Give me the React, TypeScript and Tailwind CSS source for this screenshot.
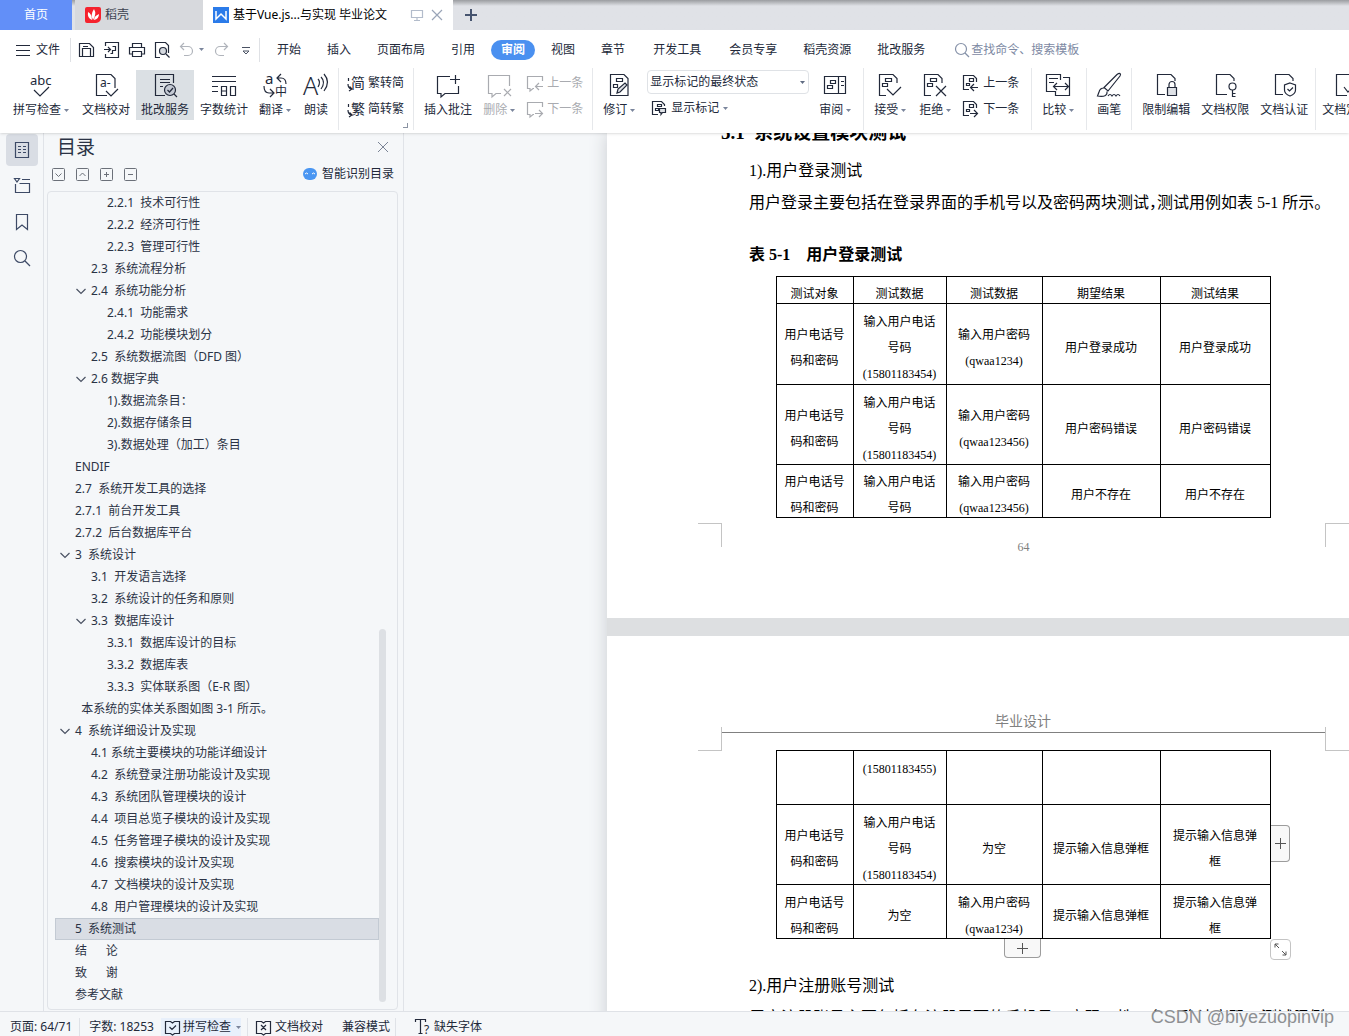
import type { ReactNode } from 'react';

type IconProps = { size?: number; className?: string; children: ReactNode };

function Icon({ size = 24, className = '', children }: IconProps) {
  return (
    <svg
      width={size}
      height={size}
      viewBox={`0 0 ${size} ${size}`}
      fill="none"
      stroke="currentColor"
      strokeWidth="1.2"
      className={`shrink-0 overflow-visible ${className}`}
      aria-hidden="true"
    >
      {children}
    </svg>
  );
}

function Caret({ className = 'text-[#7a859c]' }: { className?: string }) {
  return (
    <svg width="5" height="3" viewBox="0 0 5 3" className={`shrink-0 ${className}`} aria-hidden="true">
      <path d="M0 0h5L2.500 3z" fill="currentColor" />
    </svg>
  );
}

function Glyph({ x, y, size, children }: { x: number; y: number; size: number; children: string }) {
  return (
    <text x={x} y={y} fontSize={size} fill="currentColor" stroke="none">
      {children}
    </text>
  );
}

/* Document with two small revision bars, shared by several icons */
const revisionDoc = (
  <>
    <path d="M8 22.500H1.500v-21H15l4 4V10" />
    <path d="M7.500 5.500h6v3h-6zM4.500 10.500h5v3h-5z" />
  </>
);

const icons = {
  spell: (
    <Icon>
      <Glyph x={1} y={12} size={13}>abc</Glyph>
      <path d="M5 17l6 6 9-9" />
    </Icon>
  ),
  proof: (
    <Icon>
      <path d="M13 22.500H2.500v-21H17l4 4V15" />
      <Glyph x={6} y={14} size={12}>a-</Glyph>
      <path d="M12 18l5 5 7-7" />
    </Icon>
  ),
  service: (
    <Icon>
      <path d="M12 22.500H2.500v-21h18V10M7 6.500h10M7 9.500h10M7 13.500h3" />
      <circle cx="17" cy="17" r="5.500" fill="#c3c9d3" />
      <path d="M14.500 17l2 2 3.500-4M21 21l3 3" />
    </Icon>
  ),
  count: (
    <Icon>
      <path d="M0 3.500h24M0 8.500h24M0 13.500h6M0 18.500h6M9.500 13.500h5v9h-5zM9.500 18h5M18.500 13.500h5v9h-5z" />
    </Icon>
  ),
  translate: (
    <Icon>
      <Glyph x={2} y={11} size={15}>a</Glyph>
      <Glyph x={12} y={23} size={12}>中</Glyph>
      <path d="M18 1l-4 4 4 4M14 5h4q5 0 5 6M1 13q0 7 5 7h4M7 16l4 4-4 4" />
    </Icon>
  ),
  read: (
    <Icon>
      <text x="-1" y="22" fontSize="25" fontWeight="300" fill="currentColor" stroke="none">A</text>
      <path d="M14 6q3 3 0 8M17 4q5 5 0 12M20 1q7 8 0 17" />
    </Icon>
  ),
  addComment: (
    <Icon>
      <path d="M14 3.500H1.500v17H5V24l4-3.500h13.500V13M14 6.500h10M19.500 2v9" />
    </Icon>
  ),
  delComment: (
    <Icon>
      <path d="M14 20.500H9L5 24v-3.500H1.500v-18h21V13M17 16l7 7M24 16l-7 7" />
    </Icon>
  ),
  revise: (
    <Icon>
      <path d="M3.500 1.500H17l4 4v17H3.500zM9.500 5.500h6v3h-6zM6.500 11.500h4v3h-4z" />
      <path d="M10 20l1-4 7-6 2 2-7 7z" fill="#dfe2e7" />
    </Icon>
  ),
  pane: (
    <Icon>
      <path d="M1.500 3.500h21v17h-21zM15.500 3.500v17M7.500 7.500h5v3h-5zM4.500 12.500h5v3h-5zM18 8.500h3M18 12.500h3" />
    </Icon>
  ),
  accept: (
    <Icon>
      {revisionDoc}
      <path d="M9 16l6 6 8-8" />
    </Icon>
  ),
  reject: (
    <Icon>
      {revisionDoc}
      <path d="M13 13l10 10M23 13L13 23" />
    </Icon>
  ),
  compare: (
    <Icon>
      <path d="M9 18.500H.5v-17h14V7M3 5.500h9M3 9.500h5M17 4.500h6.500v18h-14V18M8 13.500h14M11 10l-3.500 3.500L11 17M19 10l3.500 3.500L19 17" />
    </Icon>
  ),
  brush: (
    <Icon>
      <path d="M23 .5q1 1 0 2.500L11 18l-4-3.500L20 1.500q2-1.500 3-1zM7 15q-4 0-5 4l-1.500 4q5 1 8-.5 2-1.500 1.500-4M11 23q2-3 4 0 2-3 4 0 2-3 4 0" />
    </Icon>
  ),
  lock: (
    <Icon>
      <path d="M11 21.500H3.500v-20H17l4 4V8M15 14v-2.500a3 3 0 0 1 6 0V14" />
      <path d="M13.500 14.500h9v8h-9z" fill="#dfe2e7" />
    </Icon>
  ),
  permission: (
    <Icon>
      <path d="M14 21.500H3.500v-20H17l4 4V8" />
      <circle cx="19.500" cy="13.500" r="3.500" />
      <path d="M19.500 17v7M19.500 20.500h3M19.500 23.500h3" />
    </Icon>
  ),
  certify: (
    <Icon>
      <path d="M11 21.500H3.500v-20H17l4 4V8M18 10l5.500 2v5q0 4-5.500 6-5.500-2-5.500-6v-5zM15.500 16l2 2 3.500-3.500" />
    </Icon>
  ),
  finalize: (
    <Icon>
      <path d="M13 22.500H2.500v-21H17l4 4V12M10 14l4 5 8-8" />
    </Icon>
  ),
};

function SmallComment({ dir }: { dir: 'prev' | 'next' }) {
  return (
    <Icon size={16}>
      <path d="M15.500 6V1.500H.5v12H3V16l3-2.500h1" />
      <path d={dir === 'prev' ? 'M16 11.500H9M12 8l-3.500 3.500L12 15' : 'M8 12.500h7M12 9l3.500 3.500L12 16'} />
    </Icon>
  );
}

function SmallRevision({ dir }: { dir: 'prev' | 'next' }) {
  return (
    <Icon size={16}>
      <path d="M6 14.500H.5v-14h10l3 3V7M6.500 3.500h4v3h-4zM3.500 8.500h3v2h-3z" />
      <path d={dir === 'prev' ? 'M15 12.500H7.500M11 9l-3.500 3.500L11 16' : 'M7 12.500h7M11 9l3.500 3.500L11 16'} />
    </Icon>
  );
}

function ConvertIcon({ char }: { char: string }) {
  return (
    <Icon size={16}>
      <Glyph x={3} y={13} size={14}>{char}</Glyph>
      <path d="M.5 3v3M0 9q0 4 3 5M1.500 11.500L4 14l-3 2" />
    </Icon>
  );
}

type BigButtonProps = { icon: ReactNode; label: string; caret?: boolean; active?: boolean; muted?: boolean };

function BigButton({ icon, label, caret, active, muted }: BigButtonProps) {
  return (
    <button
      className={`flex h-[50px] shrink-0 flex-col items-start pt-[3px] pl-[5px] ${caret ? 'pr-[7px]' : 'pr-[5px]'} ${
        active ? 'bg-[#dbe0e4]' : ''
      } ${muted ? 'text-[#a9abb0]' : 'text-[#22293a]'}`}
    >
      <span className="flex w-full justify-center">{icon}</span>
      <span className="mt-1 flex items-center gap-[3px] text-xs leading-[18px] whitespace-nowrap">
        {label}
        {caret && <Caret />}
      </span>
    </button>
  );
}

function SmallButton({ icon, label, muted, caret }: { icon: ReactNode; label: string; muted?: boolean; caret?: boolean }) {
  return (
    <button
      className={`flex h-[26px] items-center gap-1 text-xs whitespace-nowrap ${muted ? 'text-[#a9abb0]' : 'text-[#22293a]'}`}
    >
      {icon}
      {label}
      {caret && <Caret />}
    </button>
  );
}

function Group({ className = 'px-[5px]', children }: { className?: string; children: ReactNode }) {
  return (
    <div className={`flex h-[62px] shrink-0 items-start gap-px border-r border-[#e6e8eb] pt-0.5 ${className}`}>
      {children}
    </div>
  );
}

function TitleTabs() {
  return (
    <div className="flex h-[30px] shrink-0 bg-[#e0e2e7] bg-linear-to-b from-[#9b9da1] from-0% to-[#e0e2e7] to-20% text-xs">
      <button className="w-[72px] shrink-0 bg-[#628ff8] text-white">首页</button>
      <button className="ml-[3px] flex w-32 shrink-0 items-center gap-1 bg-[#d7d9dd] pl-[10px] text-[#3c4250]">
        <svg width="16" height="16" viewBox="0 0 16 16" aria-hidden="true">
          <path d="M2 0h12a2 2 0 0 1 2 2v9a5 5 0 0 1-5 5H2a2 2 0 0 1-2-2V2a2 2 0 0 1 2-2z" fill="#f5222d" />
          <path d="M8 13Q5 8 9 2q3 5-1 11zM7 13Q2 11 3 5q4 2 4 8zM9 13q0-4 5-6 0 5-5 6z" fill="#fff" />
        </svg>
        稻壳
      </button>
      <div className="flex w-[250px] shrink-0 items-center bg-white pl-[10px] text-black">
        <svg width="16" height="16" viewBox="0 0 16 16" aria-hidden="true">
          <path d="M0 0h16v16H0z" fill="#2b7be9" />
          <path d="M3 4v8l5-5 5 5V4" fill="none" stroke="#fff" strokeWidth="1.500" />
        </svg>
        <span className="ml-1 flex-1 whitespace-nowrap">基于Vue.js...与实现 毕业论文</span>
        <button aria-label="窗口" className="mr-2 text-[#b3bccb]">
          <Icon size={12}>
            <path d="M.5 1.500h11v7H.5zM6 8.500v3M3 11.500h6" />
          </Icon>
        </button>
        <button aria-label="关闭" className="mr-[10px] text-[#9aa5b8]">
          <Icon size={12}>
            <path d="M1 1l10 10M11 1L1 11" />
          </Icon>
        </button>
      </div>
      <button aria-label="新建" className="ml-3 text-[#46546f]">
        <Icon size={12}>
          <path d="M6 0v12M0 6h12" strokeWidth="2" />
        </Icon>
      </button>
    </div>
  );
}

const menus = [
  { label: '开始' },
  { label: '插入' },
  { label: '页面布局' },
  { label: '引用' },
  { label: '审阅', active: true },
  { label: '视图' },
  { label: '章节' },
  { label: '开发工具' },
  { label: '会员专享' },
  { label: '稻壳资源' },
  { label: '批改服务' },
];

function MenuBar() {
  return (
    <div className="flex h-[38px] shrink-0 items-center pt-px pl-4 text-xs text-[#22293a]">
      <button className="flex items-center gap-[6px]">
        <Icon size={14}>
          <path d="M0 2.500h14M0 7.500h14M0 12.500h14" strokeWidth="1" />
        </Icon>
        文件
      </button>
      <div className="ml-[10px] flex h-6 items-center gap-[9px] border-x border-[#dfe1e5] pr-[5px] pl-2">
        <button aria-label="保存">
          <Icon size={16}>
            <path d="M.5 14.500v-13h10l4 4v9zM3.500 14.500v-8h8v8M4 4.500h5" />
          </Icon>
        </button>
        <button aria-label="输出为PDF">
          <Icon size={16}>
            <path d="M1.500 4V.5h13v15h-13V12M0 7.500h6M4 5l2.500 2.500L4 10M8.500 4.500h3v4h-3v3h-2" />
          </Icon>
        </button>
        <button aria-label="打印">
          <Icon size={16}>
            <path d="M3.500 5V1.500h9V5M3.500 12H.5V5.500h15V12h-3M3.500 9.500h9v5h-9z" />
          </Icon>
        </button>
        <button aria-label="打印预览">
          <Icon size={16}>
            <path d="M6 15.500H1.500v-15h10l3 3V11" />
            <circle cx="9" cy="9" r="3.500" fill="#d5d9df" />
            <path d="M12 12l3.500 3.500" />
          </Icon>
        </button>
        <div className="flex items-center gap-1 text-[#b0b4bb]">
          <button aria-label="撤销">
            <Icon size={16}>
              <path d="M5 1L1.500 4.500 5 8M1.500 4.500H9a4.500 4.500 0 0 1 0 9H5" />
            </Icon>
          </button>
          <Caret />
        </div>
        <button aria-label="恢复" className="text-[#b0b4bb]">
          <Icon size={16}>
            <path d="M11 1l3.500 3.500L11 8M14.500 4.500H7a4.500 4.500 0 0 0 0 9h4" />
          </Icon>
        </button>
        <button aria-label="自定义快速访问" className="text-[#4a5263]">
          <Icon size={16}>
            <path d="M4 5.500h8M5 9l3 3 3-3z" strokeWidth="1" />
          </Icon>
        </button>
      </div>
      <nav className="ml-1 flex items-center">
        {menus.map((menu) => (
          <button
            key={menu.label}
            className={
              menu.active
                ? 'mx-[3px] h-5 rounded-full bg-[#4a90f0] px-[10px] font-bold whitespace-nowrap text-white'
                : menu.label === '开发工具'
                  ? 'mx-px h-5 px-[14px] whitespace-nowrap'
                  : 'h-5 px-[13px] whitespace-nowrap'
            }
          >
            {menu.label}
          </button>
        ))}
      </nav>
      <label className="ml-4 flex items-center gap-px text-[#8591a8]">
        <Icon size={16}>
          <circle cx="7" cy="7" r="5.500" />
          <path d="M11 11l4 4" />
        </Icon>
        <input
          aria-label="查找命令"
          placeholder="查找命令、搜索模板"
          className="w-32 outline-none placeholder:text-[#7d89a3]"
        />
      </label>
    </div>
  );
}

function Ribbon() {
  return (
    <div className="flex h-[65px] shrink-0 overflow-hidden pl-[3px]">
      <Group>
        <BigButton icon={icons.spell} label="拼写检查" caret />
        <BigButton icon={icons.proof} label="文档校对" />
        <BigButton icon={icons.service} label="批改服务" active />
        <BigButton icon={icons.count} label="字数统计" />
        <BigButton icon={icons.translate} label="翻译" caret />
        <BigButton icon={icons.read} label="朗读" />
      </Group>
      <Group className="relative px-[9px]">
        <div>
          <SmallButton icon={<ConvertIcon char="简" />} label="繁转简" />
          <SmallButton icon={<ConvertIcon char="繁" />} label="简转繁" />
        </div>
        <span className="absolute right-[5px] bottom-0.5 size-[5px] border-r border-b border-[#8b93a3]" />
      </Group>
      <Group className="pr-[9px] pl-[5px]">
        <BigButton icon={icons.addComment} label="插入批注" />
        <BigButton icon={icons.delComment} label="删除" caret muted />
        <div className="ml-1">
          <SmallButton icon={<SmallComment dir="prev" />} label="上一条" muted />
          <SmallButton icon={<SmallComment dir="next" />} label="下一条" muted />
        </div>
      </Group>
      <Group>
        <BigButton icon={icons.revise} label="修订" caret />
        <div className="mx-1">
          <div className="relative flex items-center">
            <select
              aria-label="标记显示方式"
              className="h-6 w-[162px] appearance-none rounded-sm border border-[#dfe2e6] pl-0.5 text-xs text-[#22293a]"
            >
              <option>显示标记的最终状态</option>
            </select>
            <Caret className="absolute right-1 text-[#5f6b82]" />
          </div>
          <div className="pt-px pl-1">
            <SmallButton
              icon={
                <Icon size={16}>
                  <path d="M7 14.500H1.500v-13h9l3 3V6M6.500 4.500h4v2h-4zM4.500 8.500h3v2h-3z" />
                  <path d="M8.500 8.500h6v4h-3l-1.500 2v-2H8.500z" fill="#dfe2e7" />
                </Icon>
              }
              label="显示标记"
              caret
            />
          </div>
        </div>
        <BigButton icon={icons.pane} label="审阅" caret />
      </Group>
      <Group className="pr-3 pl-[5px]">
        <BigButton icon={icons.accept} label="接受" caret />
        <BigButton icon={icons.reject} label="拒绝" caret />
        <div className="ml-1">
          <SmallButton icon={<SmallRevision dir="prev" />} label="上一条" />
          <SmallButton icon={<SmallRevision dir="next" />} label="下一条" />
        </div>
      </Group>
      <Group>
        <BigButton icon={icons.compare} label="比较" caret />
      </Group>
      <Group>
        <BigButton icon={icons.brush} label="画笔" />
      </Group>
      <Group className="pr-0.5 pl-[5px]">
        <BigButton icon={icons.lock} label="限制编辑" />
        <BigButton icon={icons.permission} label="文档权限" />
        <BigButton icon={icons.certify} label="文档认证" />
      </Group>
      <Group className="pl-px">
        <BigButton icon={icons.finalize} label="文档定稿" />
      </Group>
    </div>
  );
}

function SideRail() {
  return (
    <div className="flex w-11 shrink-0 flex-col items-center gap-1 border-r border-[#e0e3e8] pt-px text-[#3d4a66]">
      <button aria-label="目录" className="grid size-8 place-items-center rounded-sm bg-[#d9dde4]">
        <Icon size={16}>
          <path d="M1.500.5h13v15h-13zM4 4.500h3M4 7.500h3M4 10.500h3M9 4.500h3M9 7.500h3M9 10.500h3" />
        </Icon>
      </button>
      <button aria-label="章节" className="grid size-8 place-items-center">
        <Icon size={16}>
          <path d="M.5.5h5L3 4zM8 1.500h8M1.500 6v8.500h14v-9h-10" />
        </Icon>
      </button>
      <button aria-label="书签" className="grid size-8 place-items-center">
        <Icon size={16}>
          <path d="M2.500.5h11v15L8 11l-5.500 4.500z" />
        </Icon>
      </button>
      <button aria-label="查找" className="grid size-8 place-items-center">
        <Icon size={16}>
          <circle cx="6.500" cy="6.500" r="6" />
          <path d="M11 11l5 5" />
        </Icon>
      </button>
    </div>
  );
}

type OutlineRow = { text: string; level: number; open?: boolean; selected?: boolean };

const outline: OutlineRow[] = [
  { text: '2.2.1  技术可行性', level: 3 },
  { text: '2.2.2  经济可行性', level: 3 },
  { text: '2.2.3  管理可行性', level: 3 },
  { text: '2.3  系统流程分析', level: 2 },
  { text: '2.4  系统功能分析', level: 2, open: true },
  { text: '2.4.1  功能需求', level: 3 },
  { text: '2.4.2  功能模块划分', level: 3 },
  { text: '2.5  系统数据流图（DFD 图）', level: 2 },
  { text: '2.6 数据字典', level: 2, open: true },
  { text: '1).数据流条目：', level: 3 },
  { text: '2).数据存储条目', level: 3 },
  { text: '3).数据处理（加工）条目', level: 3 },
  { text: 'ENDIF', level: 1 },
  { text: '2.7  系统开发工具的选择', level: 1 },
  { text: '2.7.1  前台开发工具', level: 1 },
  { text: '2.7.2  后台数据库平台', level: 1 },
  { text: '3  系统设计', level: 1, open: true },
  { text: '3.1  开发语言选择', level: 2 },
  { text: '3.2  系统设计的任务和原则', level: 2 },
  { text: '3.3  数据库设计', level: 2, open: true },
  { text: '3.3.1  数据库设计的目标', level: 3 },
  { text: '3.3.2  数据库表', level: 3 },
  { text: '3.3.3  实体联系图（E-R 图）', level: 3 },
  { text: '  本系统的实体关系图如图 3-1 所示。', level: 1 },
  { text: '4  系统详细设计及实现', level: 1, open: true },
  { text: '4.1 系统主要模块的功能详细设计', level: 2 },
  { text: '4.2  系统登录注册功能设计及实现', level: 2 },
  { text: '4.3  系统团队管理模块的设计', level: 2 },
  { text: '4.4  项目总览子模块的设计及实现', level: 2 },
  { text: '4.5  任务管理子模块的设计及实现', level: 2 },
  { text: '4.6  搜索模块的设计及实现', level: 2 },
  { text: '4.7  文档模块的设计及实现', level: 2 },
  { text: '4.8  用户管理模块的设计及实现', level: 2 },
  { text: '5  系统测试', level: 1, selected: true },
  { text: '结      论', level: 1 },
  { text: '致      谢', level: 1 },
  { text: '参考文献', level: 1 },
];

const indents: Record<number, string> = { 1: 'pl-1', 2: 'pl-5', 3: 'pl-9' };

const outlineTools = [
  { label: '展开', d: 'M3.500 5.500l3 3 3-3' },
  { label: '收起', d: 'M3.500 8l3-3 3 3' },
  { label: '增加级别', d: 'M6.500 4v5M4 6.500h5' },
  { label: '减少级别', d: 'M4 6.500h5' },
];

function OutlinePanel() {
  return (
    <aside className="flex w-[360px] shrink-0 flex-col border-r border-[#e0e3e8] pr-[5px] pl-[3px] text-[#2b3345]">
      <div className="flex h-7 items-center justify-between pr-[10px] pl-[10px]">
        <h2 className="text-[19px] leading-7">目录</h2>
        <button aria-label="关闭目录" className="text-[#7b8496]">
          <Icon size={10}>
            <path d="M0 0l10 10M10 0L0 10" strokeWidth="1" />
          </Icon>
        </button>
      </div>
      <div className="flex h-[26px] items-center gap-[11px] pl-[5px]">
        {outlineTools.map((tool) => (
          <button key={tool.label} aria-label={tool.label} className="text-[#6b7079]">
            <Icon size={13}>
              <rect x=".5" y=".5" width="12" height="12" rx="1" strokeWidth="1" />
              <path d={tool.d} strokeWidth="1" />
            </Icon>
          </button>
        ))}
        <button className="mr-1 ml-auto flex items-center gap-[5px] text-xs text-[#22293a]">
          <svg width="14" height="12" viewBox="0 0 14 12" aria-hidden="true">
            <rect width="14" height="12" rx="6" fill="#4a96f2" />
            <path d="M2 6q1.500-2 3 0M9 6q1.500-2 3 0" fill="none" stroke="#fff" />
          </svg>
          智能识别目录
        </button>
      </div>
      <div className="mt-1 mb-px flex min-h-0 flex-1 overflow-hidden rounded-sm border border-[#e0e3e8] pl-[7px]">
        <ul className="min-w-0 flex-1">
          {outline.map((row) => (
            <li key={row.text}>
              <button
                className={`flex h-[22px] w-full items-center ${indents[row.level]} ${
                  row.selected ? 'border border-[#c3cad3] bg-[#d9dde4]' : 'border border-transparent'
                }`}
              >
                <span className="flex w-[15px] shrink-0 text-[#4a5263]">
                  {row.open && (
                    <Icon size={10}>
                      <path d="M.5 3L5 7.500 9.500 3" />
                    </Icon>
                  )}
                </span>
                <span className="text-xs leading-5 whitespace-pre">{row.text}</span>
              </button>
            </li>
          ))}
        </ul>
        <div className="mr-[11px] mb-[7px] flex w-[7px] flex-col justify-end">
          <div className="h-[46%] rounded-full bg-[#dde0e4]" />
        </div>
      </div>
    </aside>
  );
}

function TestTable({ rows }: { rows: { height: string; cells: string[][] }[] }) {
  return (
    <table className="w-[495px] table-fixed border-collapse text-center text-xs text-black">
      <colgroup>
        <col className="w-[77px]" />
        <col className="w-[93px]" />
        <col className="w-[96px]" />
        <col className="w-[118px]" />
        <col className="w-[110px]" />
      </colgroup>
      <tbody>
        {rows.map((row, i) => (
          <tr key={i}>
            {row.cells.map((lines, j) => (
              <td key={j} className="border border-black p-0 pr-px">
                <div className={`flex flex-col justify-center pt-2 leading-[26px] ${row.height}`}>
                  {lines.map((line, k) => (
                    <div key={k} className="h-[26px] shrink-0 whitespace-nowrap">{line}</div>
                  ))}
                </div>
              </td>
            ))}
          </tr>
        ))}
      </tbody>
    </table>
  );
}

const account = ['用户电话号', '码和密码'];

const firstRows = [
  { height: 'h-[26px]', cells: [['测试对象'], ['测试数据'], ['测试数据'], ['期望结果'], ['测试结果']] },
  {
    height: 'h-20',
    cells: [account, ['输入用户电话', '号码', '(15801183454)'], ['输入用户密码', '(qwaa1234)'], ['用户登录成功'], ['用户登录成功']],
  },
  {
    height: 'h-[79px]',
    cells: [account, ['输入用户电话', '号码', '(15801183454)'], ['输入用户密码', '(qwaa123456)'], ['用户密码错误'], ['用户密码错误']],
  },
  {
    height: 'h-[52px]',
    cells: [account, ['输入用户电话', '号码'], ['输入用户密码', '(qwaa123456)'], ['用户不存在'], ['用户不存在']],
  },
];

const secondRows = [
  { height: 'h-[53px]', cells: [[], ['(15801183455)', ''], [], [], []] },
  {
    height: 'h-[79px]',
    cells: [account, ['输入用户电话', '号码', '(15801183454)'], ['为空'], ['提示输入信息弹框'], ['提示输入信息弹', '框']],
  },
  {
    height: 'h-[53px]',
    cells: [account, ['为空'], ['输入用户密码', '(qwaa1234)'], ['提示输入信息弹框'], ['提示输入信息弹', '框']],
  },
];

const plus = (
  <Icon size={11}>
    <path d="M5.500 0v11M0 5.500h11" strokeWidth="1" />
  </Icon>
);

function DocumentArea() {
  return (
    <main className="min-w-0 flex-1 overflow-hidden pl-[203px] font-['Liberation_Serif','Noto_Sans_CJK_SC',serif] text-base text-black">
      <div className="flex w-[832px] flex-col gap-[18px] bg-[#dddfe1] shadow-[0_0_17px_#c9ccd0]">
        <section className="h-[485px] bg-white">
          <div className="flex h-[11px] items-end overflow-hidden pl-[114px]">
            <h3 className="text-[19px] leading-[22px] font-bold whitespace-pre">5.1  系统设置模块测试</h3>
          </div>
          <div className="mt-[11px] pl-[142px] leading-8 whitespace-nowrap">
            <p>1).用户登录测试</p>
            <p>
              用户登录主要包括在登录界面的手机号以及密码两块测试
              <span className="[font-feature-settings:'halt']">，</span>测试用例如表 5-1 所示。
            </p>
            <h4 className="mt-5 font-bold whitespace-pre">表 5-1    用户登录测试</h4>
          </div>
          <div className="mt-[5px] pl-[169px]">
            <TestTable rows={firstRows} />
          </div>
          <div className="mt-[5px] flex h-12 items-center justify-between pr-[90px] pl-[91px]">
            <span className="h-6 w-6 self-start border-t border-r border-[#c4c4c4]" />
            <span className="text-xs text-[#808080]">64</span>
            <span className="h-6 w-6 self-start border-t border-l border-[#c4c4c4]" />
          </div>
        </section>

        <section className="h-[700px] bg-white pt-[76px]">
          <p className="text-center text-sm leading-5 text-[#808080]">毕业设计</p>
          <div className="-mt-[5px] flex h-[23px] pr-[90px] pl-[91px]">
            <span className="h-6 w-6 border-r border-b border-[#c4c4c4]" />
            <span className="mt-[5px] flex-1 border-t border-[#808080]" />
            <span className="h-6 w-6 border-b border-l border-[#c4c4c4]" />
          </div>
          <div className="pl-[169px]">
            <div className="relative w-[495px]">
              <TestTable rows={secondRows} />
              <button
                aria-label="添加列"
                className="absolute top-[75px] left-full grid h-[37px] w-[19px] place-items-center rounded-r-sm border border-l-0 border-[#9c9c9c] bg-[#f8f8f8] text-[#555]"
              >
                {plus}
              </button>
              <button
                aria-label="添加行"
                className="absolute top-full left-[228px] grid h-[19px] w-[37px] place-items-center rounded-b-sm border border-t-0 border-[#9c9c9c] bg-[#f8f8f8] text-[#555]"
              >
                {plus}
              </button>
              <button
                aria-label="调整表格大小"
                className="absolute top-full left-[494px] grid size-[21px] place-items-center rounded-sm border border-[#c4c4c4] bg-white text-[#555]"
              >
                <Icon size={15}>
                  <path d="M2 5.500V2h3.500M2 2l4 4M13 9.500V13H9.500M13 13L9 9" strokeWidth="1" />
                </Icon>
              </button>
            </div>
          </div>
          <div className="mt-[31px] pl-[142px] leading-8 whitespace-nowrap">
            <p>2).用户注册账号测试</p>
            <p>用户注册账号主要包括在注册界面的手机号、密码、性、名、确认密码，测试用例</p>
          </div>
        </section>
      </div>
    </main>
  );
}

function StatusBar() {
  return (
    <footer className="flex h-[25px] shrink-0 items-center border-t border-[#dfe2e7] bg-[#f5f7f9] pt-[6px] pl-[10px] text-xs leading-[18px] whitespace-nowrap text-[#22293a]">
      <span>页面: 64/71</span>
      <span className="ml-[7px] border-l border-[#dfe2e7] pl-[9px]">字数: 18253</span>
      <button className="ml-[7px] flex items-center gap-[3px] bg-[#e8f0fb] pl-1">
        <Icon size={15}>
          <path d="M.5 1.500h5l2 1.500 2-1.500h5v12h-5L7.500 15l-2-1.500h-5zM4.500 7l2.500 2.500L11 5.500" />
        </Icon>
        拼写检查
        <Caret className="ml-0.5 text-[#7a859c]" />
      </button>
      <button className="ml-[6px] flex items-center gap-1 border-l border-[#dfe2e7] pl-2">
        <Icon size={15}>
          <path d="M.5 1.500h5l2 1.500 2-1.500h5v12h-5L7.500 15l-2-1.500h-5zM5 5l5 5M10 5l-5 5" />
        </Icon>
        文档校对
      </button>
      <span className="ml-[19px] border-r border-[#dfe2e7] pr-[5px]">兼容模式</span>
      <button className="ml-[19px] flex items-center gap-[3px]">
        <Icon size={16}>
          <path d="M.5 3V.5h10V3M5.500.5v14M3.500 14.500h4" />
          <Glyph x={9} y={15} size={12}>?</Glyph>
        </Icon>
        缺失字体
      </button>
    </footer>
  );
}

export default function App() {
  return (
    <div className="relative flex h-screen flex-col overflow-hidden bg-[#f5f7f9] font-['Noto_Sans','Noto_Sans_CJK_SC',sans-serif]">
      <header className="z-10 flex shrink-0 flex-col bg-white shadow-sm">
        <TitleTabs />
        <MenuBar />
        <Ribbon />
      </header>
      <div className="flex min-h-0 flex-1">
        <SideRail />
        <OutlinePanel />
        <DocumentArea />
      </div>
      <StatusBar />
      {/* Watermark over the bottom corner */}
      <span className="pointer-events-none absolute right-[15px] bottom-[7px] font-['Liberation_Sans',sans-serif] text-lg leading-6 text-[#8e9093]">
        CSDN @biyezuopinvip
      </span>
    </div>
  );
}
